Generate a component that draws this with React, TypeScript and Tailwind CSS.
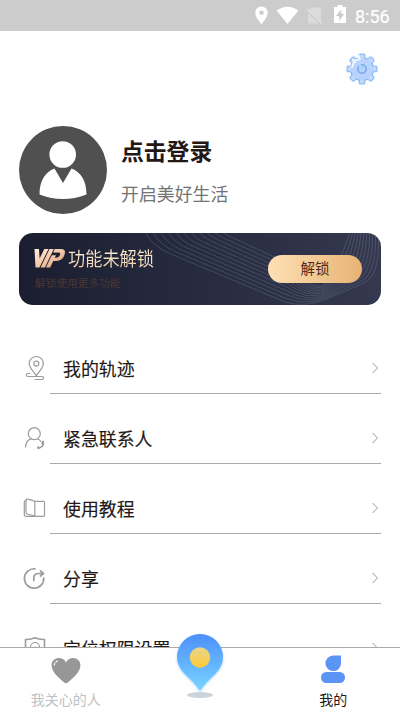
import React from "react";

const TEETH = [0, 45, 90, 135, 180, 225, 270, 315];

// Ribbon of contour lines, blended from the outer curve to the inner one.
const OUTER = [126, -1, 134, 14, 152, 21, 266, 69, 286, 75, 308, 66, 345, 50, 362, 42, 359, -1];
const INNER = [203, -1, 206, 1, 210, 3, 266, 29, 292, 58, 305, 52, 318, 32, 325, 18, 331, -1];
const RIBBON = Array.from({ length: 11 }, (_, i) => {
  const p = OUTER.map((v, k) => +(v + ((INNER[k] - v) * i) / 10).toFixed(1));
  return `M${p[0]} ${p[1]}Q${p[2]} ${p[3]} ${p[4]} ${p[5]}L${p[6]} ${p[7]}Q${p[8]} ${p[9]} ${p[10]} ${p[11]}L${p[12]} ${p[13]}Q${p[14]} ${p[15]} ${p[16]} ${p[17]}`;
});

function StatusBar() {
  return (
    <header className="flex h-[31px] shrink-0 items-center bg-[#cccccc] text-white">
      <svg className="block h-[31px] w-[350px]" viewBox="0 0 350 31" fill="currentColor">
        <path fillRule="evenodd" d="M261.500 6.500a6.300 6.300 0 0 0-6.300 6.300c0 4.700 6.300 11.500 6.300 11.500s6.300-6.800 6.300-11.500a6.300 6.300 0 0 0-6.300-6.300zm0 4a2.300 2.300 0 1 1 0 4.600 2.300 2.300 0 0 1 0-4.600z" />
        <path d="M276.500 10.500q11-7.600 22 0L287.500 24z" />
        <path d="M312 7.500h9v14.500L308.500 9.800zM308 12.800 318.500 23.500H308z" opacity=".3" />
        <path d="M307 9 322 24" stroke="white" strokeWidth="1.300" opacity=".4" />
        <path fillRule="evenodd" d="M337.500 5h5v2h3.500v16h-12V7h3.500zM341.200 9.500l-5.200 6.500h3.200v5l5-7.200h-3z" />
      </svg>
      <span className="mt-[3px] ml-[5px] font-[Roboto,sans-serif] text-[18px] leading-none [-webkit-text-stroke:0.2px_white]">8:56</span>
    </header>
  );
}

function Gear() {
  return (
    <svg className="size-[34px]" viewBox="-17 -17 34 34">
      <g fill="#78aef0" stroke="#dcecff" strokeWidth="1">
        {TEETH.map((a) => (
          <rect key={a} x="-3.500" y="-15.700" width="7" height="9" rx="2" transform={`rotate(${a})`} />
        ))}
      </g>
      <circle r="12" fill="#78aef0" />
      <g fill="#c4dafd">
        {TEETH.map((a) => (
          <rect key={a} x="-2.400" y="-14.500" width="4.800" height="9" rx="1.300" transform={`rotate(${a})`} />
        ))}
      </g>
      <circle r="11" fill="#bad3fc" />
      <path d="M-10-2Q-9-9-2-10M-3-13v3M-9-9l2 2" fill="none" stroke="#eef6ff" strokeWidth="2" strokeLinecap="round" />
      <circle r="4.200" fill="#b5d0fc" stroke="#72a8f0" strokeWidth="1.500" />
      <path d="M-3-3A4.200 4.200 0 0 1-1-4.100" stroke="#cfe2ff" strokeWidth="1.500" fill="none" />
    </svg>
  );
}

function Avatar() {
  return (
    <svg className="size-[88px] shrink-0" viewBox="0 0 88 88">
      <circle cx="44" cy="44" r="44" fill="#505050" />
      <circle cx="43.700" cy="28.500" r="13.300" fill="white" />
      <path fill="white" d="M35.500 42.500 44 57l8.500-14.500C62 46 67.500 55 67.500 68.500Q44 77.500 20.500 68.500C20.500 55 26 46 35.500 42.500z" />
    </svg>
  );
}

function VipBanner() {
  return (
    <section className="relative mx-[19px] mt-[19px] flex h-[72px] items-center overflow-hidden rounded-[14px] bg-linear-to-r from-[#1b1e30] via-[#262b40] to-[#343950]">
      <svg className="absolute inset-0 h-[72px] w-[362px]" viewBox="0 0 362 72" fill="none" stroke="#8d92a8" strokeOpacity=".32" strokeWidth=".9">
        {RIBBON.map((d) => (
          <path key={d} d={d} />
        ))}
      </svg>
      <div className="relative ml-[15px] flex flex-col pb-[2px]">
        <div className="flex h-[24px] items-center">
          <svg className="h-[20px] w-[32px]" viewBox="0 0 32 20">
            <defs>
              <linearGradient id="vip" x1="0" y1="0" x2="1" y2="1">
                <stop offset="0" stopColor="#fff0e2" />
                <stop offset=".5" stopColor="#f5c7a5" />
                <stop offset="1" stopColor="#cf9370" />
              </linearGradient>
            </defs>
            <path
              fill="url(#vip)"
              d="M.5 1H5l.6 9.500L10.300 1h4.200L5.500 19.500H1.500zM15.500 1h4.300l-8.900 18.500H6.600zM20.800 1H27q5.200 0 3.600 5.500Q28.800 13 22.500 13h-3.200l-3.100 6.500h-4.300L17.800 7.200h4.200l-1.200 2.500h1.500q2.800 0 3.700-2.700.8-2.500-1.600-2.500h-5.200z"
            />
          </svg>
          <span className="ml-[2px] inline-block origin-center scale-y-[1.100] bg-linear-to-b from-[#fff1dc] to-[#edcfaa] bg-clip-text text-[17.200px] leading-[24px] whitespace-nowrap text-transparent">功能未解锁</span>
        </div>
        <p className="mt-[5px] ml-[1px] text-[10.700px] leading-[16px] whitespace-nowrap text-[#493632]">解锁使用更多功能</p>
      </div>
      <button className="relative mr-[19px] ml-auto h-[28px] w-[94px] rounded-full bg-linear-to-r from-[#fee0b4] to-[#e7b374] pb-[2px] text-[14.500px] leading-[26px] text-[#51291b]">解锁</button>
    </section>
  );
}

function TrackIcon() {
  return (
    <>
      <path d="M13.300 20.500C9 15.500 6.200 12 6.200 8.600a7 7 0 0 1 14.200 0c0 3.400-2.800 6.900-7.100 11.900z" />
      <circle cx="13.300" cy="8.600" r="2.500" />
      <path d="M7 18.500H5q-1.700 0-1.700 1.500T5 21.500h14q1.500 0 1.500 1.500T19 24.500h-7" />
    </>
  );
}

function ContactIcon() {
  return (
    <>
      <circle cx="11.300" cy="8.700" r="6" />
      <path d="M2.500 22q.5-6.700 6-8.300M14.800 14q2 .7 3 2.500" />
      <path d="M20 16.500q1.200 3-1 5t-4.300 1.500M19 18.300l1-2M15 22l1.500 1" strokeWidth="1.600" />
    </>
  );
}

function BookIcon() {
  return (
    <>
      <path d="M12 6.300h8.500q1 0 1 1v13q0 1-1 1H3q-1.700 0-1.700-1.500V7q0-1.500 1.700-1.500" />
      <path d="M3 5q0-1.200 1.500-.8l6 1.500q1.300.4 1.300 1.600v13.900L4 19q-1-.5-1-1.500zM11.800 7v14" />
    </>
  );
}

function ShareIcon() {
  return (
    <>
      <path d="M12 3.800A9.700 9.700 0 1 0 20.800 13" strokeWidth="1.700" />
      <path d="M10.800 15.500V13q0-4.500 5-4.500h3M17.500 5.800 20.500 8.500 17.500 11" strokeWidth="1.700" />
    </>
  );
}

function ShieldIcon() {
  return (
    <>
      <path d="M2.500 24V4.500q5 .3 9.500-1.700 4.500 2 9.500 1.700V24" strokeWidth="1.600" />
      <path d="M7.500 17V12a4.500 4.500 0 0 1 9 0v5M12 12l2 2" />
    </>
  );
}

const ROWS = [
  { label: "我的轨迹", Icon: TrackIcon },
  { label: "紧急联系人", Icon: ContactIcon },
  { label: "使用教程", Icon: BookIcon },
  { label: "分享", Icon: ShareIcon },
  { label: "定位权限设置", Icon: ShieldIcon },
];

function MenuRow({ label, Icon }: { label: string; Icon: () => React.JSX.Element }) {
  return (
    <li className="flex h-[70px] shrink-0 pr-[19px] pl-[23px]">
      <svg className="mt-[31px] h-[27px] w-[27px] shrink-0" viewBox="0 0 27 27" fill="none" stroke="#9c9c9c" strokeWidth="1.200" strokeLinecap="round" strokeLinejoin="round">
        <Icon />
      </svg>
      <div className="flex flex-1 items-center justify-between border-b border-[#aaaaaa] pt-[20px] pl-[13px]">
        <span className="mb-[2px] text-[17.900px] leading-[26px] whitespace-nowrap text-[#231815] [-webkit-text-stroke:0.15px_#231815]">{label}</span>
        <svg className="mr-[2px] mb-[1px] h-[12px] w-[8px]" viewBox="0 0 8 12" fill="none" stroke="#999999" strokeWidth="1">
          <path d="M1.500 1 6.500 6 1.500 11" />
        </svg>
      </div>
    </li>
  );
}

function BottomNav() {
  return (
    <nav className="relative grid h-[64px] shrink-0 grid-cols-3 border-t border-[#aaaaaa] bg-white">
      <div className="flex flex-col items-center pr-[2px]">
        <svg className="mt-[9px] h-[27px] w-[30px]" viewBox="0 0 30 27">
          <path fill="#979797" d="M15 26.500Q12 25 5 18C-3 9 1 1 8 1q5 0 7 4.500Q17 1 22 1c7 0 11 8 3 17q-7 7-10 8.500z" />
          <path d="M3.300 8.500Q3.500 5 7 3.800" stroke="white" strokeWidth="1.200" strokeDasharray="2.500 1" fill="none" />
        </svg>
        <span className="mt-[5px] text-[14px] leading-[20px] text-[#c0c1c3]">我关心的人</span>
      </div>
      <div />
      <div className="flex flex-col items-center">
        <svg className="mt-[7px] h-[29px] w-[26px]" viewBox="0 0 26 29" fill="#5c94f5">
          <path d="M13 .5h8V8.500A7.800 7.800 0 1 1 13 .5z" />
          <rect x="1" y="17" width="24" height="11" rx="5.200" />
        </svg>
        <span className="mt-[5px] text-[14px] leading-[20px] text-[#231815]">我的</span>
      </div>
      <svg className="absolute top-[-19px] left-[170px] h-[73px] w-[60px]" viewBox="0 0 60 73">
        <defs>
          <linearGradient id="pin" x1="0" y1="0" x2="0" y2="1">
            <stop offset="0" stopColor="#4d8ffb" />
            <stop offset="1" stopColor="#78d5ff" />
          </linearGradient>
          <linearGradient id="sun" x1="0" y1="0" x2="0" y2="1">
            <stop offset="0" stopColor="#e8d68b" />
            <stop offset="1" stopColor="#ffc935" />
          </linearGradient>
          <filter id="glow" x="-20%" y="-20%" width="140%" height="140%">
            <feDropShadow dx="0" dy="1" stdDeviation="1.500" floodColor="#76b7ff" floodOpacity=".55" />
          </filter>
        </defs>
        <ellipse cx="30" cy="66" rx="13" ry="3" fill="#cbd4da" />
        <path filter="url(#glow)" fill="url(#pin)" d="M30 5A23 23 0 0 0 7 28C7 39 15 45 21 51Q26 56 30 62Q34 56 39 51C45 45 53 39 53 28A23 23 0 0 0 30 5z" />
        <circle cx="30" cy="28.500" r="10.200" fill="url(#sun)" />
      </svg>
    </nav>
  );
}

export default function App() {
  return (
    <div className="flex h-[711px] w-[400px] flex-col overflow-hidden bg-white font-['Noto_Sans_CJK_SC',sans-serif]">
      <StatusBar />
      <main className="flex min-h-0 flex-1 flex-col overflow-hidden">
        <div className="flex h-[95px] shrink-0 justify-end pt-[21px] pr-[21px]">
          <Gear />
        </div>
        <section className="flex h-[88px] shrink-0 pl-[19px]">
          <Avatar />
          <div className="ml-[14px] flex flex-col">
            <h1 className="mt-[8px] text-[22.800px] leading-[34px] font-bold text-[#231815]">点击登录</h1>
            <p className="mt-[12px] text-[17.900px] leading-[26px] text-[#737373]">开启美好生活</p>
          </div>
        </section>
        <div className="shrink-0">
          <VipBanner />
        </div>
        <ul className="mt-[19px] flex flex-col">
          {ROWS.map((row) => (
            <MenuRow key={row.label} {...row} />
          ))}
        </ul>
      </main>
      <BottomNav />
    </div>
  );
}
